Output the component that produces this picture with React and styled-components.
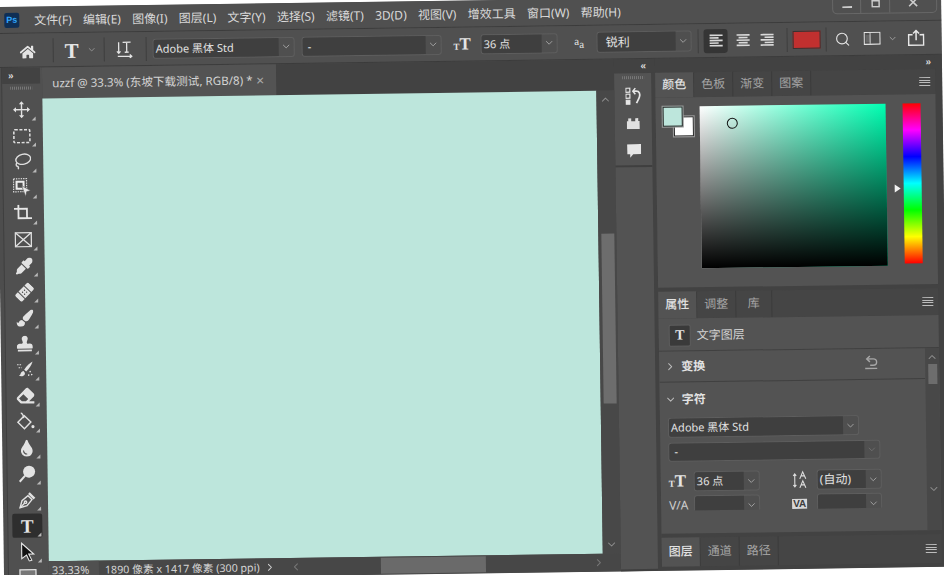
import React from "react";
import styled, { createGlobalStyle } from "styled-components";
import { FaHome, FaEyeDropper, FaBandAid, FaPaintBrush, FaStamp, FaEraser, FaTint } from "react-icons/fa";
import { ChevronDown, ChevronRight, ChevronLeft, ChevronUp, Search } from "lucide-react";

const GlobalStyle = createGlobalStyle`
  html, body {
    margin: 0;
    height: 100%;
    overflow: hidden;
    background: #fff;
  }
`;

const FONT = `"Noto Sans", "Noto Sans CJK SC", sans-serif`;

// the photo of the screen is slightly tilted, the whole window turns with it
const Window = styled.div`
  width: 945px;
  height: 573px;
  margin: 6.5px 0 0 -4px;
  transform: rotate(-0.8deg);
  transform-origin: 4px -6.5px;
  background: #4d4d4d;
  color: #d6d6d6;
  font: 12px/16px ${FONT};
  display: flex;
  flex-direction: column;
  overflow: hidden;
`;

/* title bar */
const TitleBar = styled.div`
  height: 27px;
  flex: none;
  display: flex;
  align-items: center;
  padding: 1px 4px 0 8px;
  box-sizing: border-box;
  background: #505050;
  border-bottom: 1px solid #3c3c3c;
`;

const PsLogo = styled.div`
  width: 15px;
  height: 15px;
  background: #0f2f55;
  border-radius: 2px;
  color: #31a8ff;
  font: bold 9px/15px "Liberation Sans", sans-serif;
  text-align: center;
  margin-right: 15px;
`;

const MenuItem = styled.span`
  margin-right: 11.3px;
  white-space: nowrap;
  color: #d9d9d9;
`;

const WinControls = styled.div`
  margin-left: auto;
  align-self: flex-start;
  margin-top: -7px;
  width: 105px;
  height: 25px;
  flex: none;
  display: flex;
  border: 1px solid #676767;
  border-radius: 0 0 5px 5px;
  box-sizing: border-box;
`;

const WinButton = styled.div`
  width: ${(p) => p.$w}px;
  flex: ${(p) => (p.$w ? "none" : 1)};
  display: flex;
  align-items: flex-end;
  justify-content: center;
  padding-bottom: 5px;
  box-sizing: border-box;
  & + & {
    border-left: 1px solid #676767;
  }
`;

/* options bar */
const OptionsBar = styled.div`
  height: 34px;
  flex: none;
  display: flex;
  align-items: center;
  padding-left: 23px;
  background: #505050;
  border-bottom: 1px solid #3c3c3c;
  box-sizing: border-box;
`;

const Sep = styled.div`
  width: 1px;
  height: 24px;
  flex: none;
  background: #3e3e3e;
  margin: 0 ${(p) => p.$r ?? 6}px 0 ${(p) => p.$l ?? 6}px;
`;

const Combo = styled.div`
  width: ${(p) => p.$w}px;
  height: ${(p) => p.$h ?? 20}px;
  flex: none;
  display: flex;
  box-sizing: border-box;
  border: 1px solid #5e5e5e;
  border-radius: 3px;
  background: #4f4f4f;
  margin: ${(p) => p.$m ?? "0"};
`;

const ComboText = styled.div`
  flex: 1;
  min-width: 0;
  background: #3f3f3f;
  padding-left: ${(p) => p.$pad ?? 2}px;
  font-size: ${(p) => p.$size ?? 11}px;
  line-height: ${(p) => p.$line ?? 17}px;
  color: #e2e2e2;
  white-space: nowrap;
  border-radius: 2px 0 0 2px;
`;

const ComboArrow = styled.div`
  width: 15px;
  flex: none;
  display: flex;
  align-items: center;
  justify-content: center;
  color: ${(p) => (p.$dim ? "#777" : "#bbb")};
`;

const OptIcon = styled.div`
  flex: none;
  width: ${(p) => p.$w}px;
  margin: ${(p) => p.$m ?? "0"};
  padding-top: ${(p) => p.$top ?? 0}px;
  display: flex;
  align-items: center;
  justify-content: center;
  color: #e4e4e4;
`;

const SerifT = styled.span`
  font: bold ${(p) => p.$size ?? 20}px/${(p) => p.$size ?? 20}px "Liberation Serif", serif;
  color: #e6e6e6;
`;

const SizeT = ({ big = 20, small = 10 }) => (
  <span>
    <SerifT $size={small}>T</SerifT>
    <SerifT $size={big}>T</SerifT>
  </span>
);

const AlignBtn = styled.div`
  width: ${(p) => p.$w ?? 24}px;
  height: 24px;
  flex: none;
  margin-right: ${(p) => p.$mr ?? 0}px;
  display: flex;
  align-items: center;
  justify-content: center;
  border-radius: 3px;
  background: ${(p) => (p.$on ? "#353535" : "transparent")};
`;

const ColorChip = styled.div`
  width: 28px;
  height: 18px;
  flex: none;
  background: #c1302f;
  border: 1px solid #333;
  box-sizing: border-box;
`;

const AlignIcon = ({ kind }) => {
  const rows = [13, 9, 13, 9, 13];
  return (
    <svg width="15" height="15" viewBox="0 0 15 15">
      {rows.map((w, i) => {
        const x = kind === "left" ? 1 : kind === "right" ? 14 - w : 7.5 - w / 2;
        return <rect key={i} x={x} y={1.5 + i * 2.6} width={w} height="1.6" fill="#d9d9d9" />;
      })}
    </svg>
  );
};

const WorkspaceIcon = () => (
  <svg width="17" height="13" viewBox="0 0 17 13" fill="none" stroke="#e4e4e4">
    <rect x="0.5" y="0.5" width="16" height="12" strokeWidth="1.3" />
    <rect x="2" y="3" width="5" height="7.5" fill="#e4e4e4" opacity="0.15" stroke="none" />
    <path d="M6.5 1v11" strokeWidth="0.8" />
  </svg>
);

const ShareIcon = () => (
  <svg width="17" height="17" viewBox="0 0 17 17" fill="none" stroke="#e8e8e8" strokeWidth="1.5">
    <path d="M5 5.5H1v10.5h15V5.5h-4" />
    <path d="M8.5 11V1.5M5.5 4.3l3-3 3 3" />
  </svg>
);

const OrientIcon = () => (
  <svg width="18" height="18" viewBox="0 0 18 18" fill="none" stroke="#e4e4e4" strokeWidth="1.3">
    <path d="M7 2h8M11 2v10M9 12h4" />
    <path d="M3 2v11M1.2 11l1.8 2 1.8-2" />
    <path d="M2 16h14M14 14.2l2 1.8-2 1.8" />
  </svg>
);

/* workspace */
const Workspace = styled.div`
  flex: 1;
  min-height: 0;
  display: flex;
`;

const ToolColumn = styled.div`
  width: 41px;
  flex: none;
  margin-left: 4px;
  padding-right: 2px;
  background: #505050;
  border-left: 1px solid #3f3f3f;
  box-sizing: border-box;
  display: flex;
  flex-direction: column;
  align-items: center;
`;

const CollapseBar = styled.div`
  height: ${(p) => p.$h ?? 14}px;
  flex: none;
  align-self: stretch;
  margin-right: ${(p) => p.$mr ?? 0}px;
  display: flex;
  align-items: center;
  justify-content: ${(p) => p.$justify ?? "flex-start"};
  padding: 0 ${(p) => p.$pad ?? 6}px;
  background: #424242;
  color: #ddd;
  font: bold 10px/10px "Liberation Sans", sans-serif;
`;

const Grip = styled.div`
  width: 22px;
  height: 3px;
  flex: none;
  margin: ${(p) => p.$m ?? "3px auto 8px"};
  background: repeating-linear-gradient(to right, #777 0 1px, transparent 1px 2px);
`;

const Tool = styled.div`
  width: 30px;
  height: 24px;
  margin-bottom: 2px;
  flex: none;
  position: relative;
  display: flex;
  align-items: center;
  justify-content: center;
  color: #e2e2e2;
  border-radius: 2px;
  background: ${(p) => (p.$on ? "#2e2e2e" : "transparent")};
  &::after {
    content: "";
    display: ${(p) => (p.$plain ? "none" : "block")};
    position: absolute;
    right: 1px;
    bottom: 1px;
    border-style: solid;
    border-width: 0 0 4px 4px;
    border-color: transparent transparent #b8b8b8 transparent;
  }
`;

const MoveIcon = () => (
  <svg width="18" height="18" viewBox="0 0 18 18" fill="#e2e2e2" stroke="#e2e2e2">
    <path d="M9 2v14M2 9h14" strokeWidth="1.4" />
    <path d="M9 0.5l2.6 3H6.4zM9 17.5l2.6-3H6.4zM0.5 9l3-2.6v5.2zM17.5 9l-3-2.6v5.2z" stroke="none" />
  </svg>
);
const MarqueeIcon = () => (
  <svg width="18" height="15" viewBox="0 0 18 15" fill="none" stroke="#dedede" strokeWidth="1.6" strokeDasharray="3 1.6">
    <rect x="1" y="1" width="16" height="13" rx="1" />
  </svg>
);
const LassoIcon = () => (
  <svg width="18" height="18" viewBox="0 0 18 18" fill="none" stroke="#dedede" strokeWidth="1.4">
    <ellipse cx="10" cy="6.5" rx="7.5" ry="5" transform="rotate(-12 10 6.5)" />
    <path d="M4 10c-1.5 1-1.5 3 0 3.5 1 .3 1.6 1.5 .8 3" />
  </svg>
);
const ObjectSelectIcon = () => (
  <svg width="20" height="20" viewBox="0 0 20 20" fill="none">
    <rect x="1" y="1" width="13" height="13" stroke="#ddd" strokeWidth="1.2" strokeDasharray="1.4 1" />
    <rect x="4" y="4" width="7" height="7" stroke="#eee" strokeWidth="2" />
    <path d="M9 8l9 5-4 1 -1 5z" fill="#e8e8e8" stroke="#4d4d4d" strokeWidth="0.6" />
  </svg>
);
const CropIcon = () => (
  <svg width="18" height="18" viewBox="0 0 18 18" fill="none" stroke="#e6e6e6" strokeWidth="1.8">
    <path d="M0 4h13v10M4.5 0v13.5H18" />
  </svg>
);
const FrameIcon = () => (
  <svg width="18" height="16" viewBox="0 0 18 16" fill="none" stroke="#e0e0e0" strokeWidth="1.3">
    <rect x="1" y="1" width="16" height="14" />
    <path d="M1 1l16 14M17 1L1 15" />
  </svg>
);
const MixerIcon = () => (
  <svg width="19" height="18" viewBox="0 0 19 18" fill="#e2e2e2">
    <path d="M16.5 1c-3 1.5-6 4.5-8.5 8l2 1.8c3-2.5 5.5-6.2 6.5-9.8z" />
    <path d="M7.3 10.2c-2 .2-2.6 1.8-3 3-.2 .8-1 1.2-1.8 1.3 1.6 1.3 5 1.3 6-.8 .5-1 .3-2-1.2-3.5z" />
    <path d="M1 4h5M2.5 7h3" stroke="#e2e2e2" strokeDasharray="1.5 1" />
    <circle cx="14" cy="11" r="0.8" /><circle cx="15.5" cy="14" r="0.8" /><circle cx="12.5" cy="14.5" r="0.8" />
  </svg>
);
const BucketIcon = () => (
  <svg width="20" height="20" viewBox="0 0 20 20" fill="none" stroke="#e2e2e2" strokeWidth="1.4">
    <path d="M8.5 4L2 10.5 8.5 17 15 10.5z" />
    <path d="M5 1.5c1.5 0 2.5 2 3 5" />
    <circle cx="17" cy="15" r="1.6" fill="#e2e2e2" stroke="none" />
  </svg>
);
const DodgeIcon = () => (
  <svg width="19" height="19" viewBox="0 0 19 19" fill="#e2e2e2">
    <circle cx="11.5" cy="7" r="6" />
    <path d="M7.5 11L2 17" stroke="#e2e2e2" strokeWidth="2" />
  </svg>
);
const PenIcon = () => (
  <svg width="19" height="19" viewBox="0 0 19 19" fill="none" stroke="#e2e2e2" strokeWidth="1.4">
    <path d="M2 17l2-7 6-5 4 4-5 6z" />
    <path d="M2 17l4.5-4.5" />
    <circle cx="7.5" cy="11.5" r="1.2" />
    <path d="M11 2.5l5.5 5.5" strokeWidth="2.4" />
  </svg>
);
const ArrowIcon = () => (
  <svg width="16" height="20" viewBox="0 0 16 20" fill="#111" stroke="#e6e6e6" strokeWidth="1.1">
    <path d="M2 1.5l12 11h-5l3 6-2.4 1-2.8-6L2 17z" />
  </svg>
);
const ColorRectIcon = () => (
  <svg width="18" height="18" viewBox="0 0 18 18" fill="#777" stroke="#e0e0e0" strokeWidth="1.3">
    <rect x="1" y="1" width="16" height="16" />
  </svg>
);
const ResetGlyph = () => (
  <svg width="14" height="15" viewBox="0 0 14 15" fill="none" stroke="#a6a6a6" strokeWidth="1.4">
    <path d="M3 4h6c2.2 0 3.5 1.4 3.5 3.2S11.2 10.4 9 10.4H6" />
    <path d="M5.8 1L2.6 4l3.2 3" />
    <path d="M1 13.6h12" />
  </svg>
);

const TOOLS = [
  <MoveIcon />,
  <MarqueeIcon />,
  <LassoIcon />,
  <ObjectSelectIcon />,
  <CropIcon />,
  <FrameIcon />,
  <FaEyeDropper size={17} />,
  <FaBandAid size={19} style={{ transform: "rotate(-45deg)" }} />,
  <FaPaintBrush size={17} />,
  <FaStamp size={16} />,
  <MixerIcon />,
  <FaEraser size={18} />,
  <BucketIcon />,
  <FaTint size={17} />,
  <DodgeIcon />,
  <PenIcon />,
];

/* document area */
const DocArea = styled.div`
  width: 572px;
  flex: none;
  display: flex;
  flex-direction: column;
`;

const TabBar = styled.div`
  height: 31px;
  flex: none;
  display: flex;
  background: #424242;
`;

const DocTab = styled.div`
  width: 234px;
  display: flex;
  align-items: center;
  padding: 0 12px 0 10px;
  box-sizing: border-box;
  background: #535353;
  font-size: 11.6px;
  color: #d4d4d4;
  white-space: nowrap;
`;

const Close = styled.span`
  margin-left: auto;
  color: #aaa;
  font-size: 14px;
`;

const CanvasRow = styled.div`
  flex: 1;
  min-height: 0;
  display: flex;
`;

const Canvas = styled.div`
  flex: 1;
  background: #bde6dc;
`;

const VScroll = styled.div`
  width: ${(p) => p.$w ?? 18}px;
  flex: none;
  display: flex;
  flex-direction: column;
  align-items: center;
  justify-content: space-between;
  background: #484848;
  position: relative;
  padding: 3px 0;
  box-sizing: border-box;
  color: #8c8c8c;
`;

const VThumb = styled.div`
  position: absolute;
  left: 3px;
  right: 2px;
  top: ${(p) => p.$top}px;
  height: ${(p) => p.$h}px;
  background: #6d6d6d;
`;

const StatusBar = styled.div`
  height: 18px;
  flex: none;
  display: flex;
  align-items: center;
  font-size: 11px;
  color: #d4d4d4;
  white-space: nowrap;
  background: #474747;
`;

const Zoom = styled.div`
  width: 50px;
  padding-left: 3px;
  box-sizing: border-box;
  background: #505050;
  line-height: 18px;
  height: 18px;
`;

const DocInfo = styled.div`
  width: 179px;
  padding-left: 6px;
  flex: none;
  display: flex;
  align-items: center;
  justify-content: space-between;
  padding-right: 2px;
  box-sizing: border-box;
  font-size: 10.7px;
`;

const HScroll = styled.div`
  flex: 1;
  display: flex;
  align-items: center;
  justify-content: space-between;
  position: relative;
  height: 100%;
  color: #777;
  padding: 0 16px 0 12px;
  box-sizing: border-box;
`;

const HThumb = styled.div`
  position: absolute;
  left: 103px;
  width: 105px;
  top: 1px;
  bottom: 1px;
  background: #6a6a6a;
`;

/* dock strip of collapsed panels */
const DockStrip = styled.div`
  width: 41px;
  flex: none;
  display: flex;
  flex-direction: column;
  background: #424242;
`;

const DockBox = styled.div`
  width: 37px;
  background: #535353;
  border-bottom: 2px solid #3f3f3f;
  display: flex;
  flex-direction: column;
  align-items: center;
  color: #e0e0e0;
  height: ${(p) => p.$h ?? "auto"};
  flex: ${(p) => (p.$grow ? 1 : "none")};
`;

const DockIcon = styled.div`
  height: 28px;
  display: flex;
  align-items: center;
`;

const HistoryIcon = () => (
  <svg width="16" height="18" viewBox="0 0 16 18" fill="none" stroke="#e6e6e6">
    <rect x="0.5" y="1" width="4" height="4" strokeWidth="1.2" />
    <rect x="0.5" y="7" width="4" height="4" strokeWidth="1.2" />
    <rect x="0.5" y="13" width="4" height="4" fill="#e6e6e6" />
    <path d="M8 4h3c3 0 4 3 3 6-.6 2-2 4-3 6" strokeWidth="1.7" />
    <path d="M10 1L7.5 4 10 7" strokeWidth="1.5" />
  </svg>
);
const LibraryIcon = () => (
  <svg width="13" height="11" viewBox="0 0 13 11" fill="#e0e0e0">
    <path d="M0 3h1.5V0h3v3h4V0h3v3H13v8H0z" />
  </svg>
);
const CommentIcon = () => (
  <svg width="14" height="14" viewBox="0 0 14 14" fill="#e6e6e6">
    <path d="M0 0h14v10H6l-3 3.5V10H0z" />
  </svg>
);

/* panels */
const Panels = styled.div`
  flex: 1;
  min-width: 0;
  display: flex;
  flex-direction: column;
  background: #424242;
  padding-right: 7px;
`;

const PanelTabs = styled.div`
  height: ${(p) => p.$h}px;
  flex: none;
  display: flex;
  background: #454545;
  margin: ${(p) => p.$mt ?? 0}px 0 ${(p) => p.$mb ?? 0}px;
`;

const PanelTab = styled.div`
  width: ${(p) => p.$w ?? 39}px;
  display: flex;
  align-items: center;
  justify-content: center;
  padding-bottom: 2px;
  font-size: 12px;
  font-weight: ${(p) => (p.$on ? 500 : 400)};
  color: ${(p) => (p.$on ? "#e2e2e2" : "#a4a4a4")};
  background: ${(p) => (p.$on ? "#535353" : "transparent")};
  border-right: 1px solid #3c3c3c;
  box-sizing: border-box;
`;

const MenuLines = styled.div`
  margin: auto 5px auto auto;
  width: 11px;
  height: 9px;
  background: repeating-linear-gradient(to bottom, #bdbdbd 0 1px, transparent 1px 2.6px);
`;

const ColorBody = styled.div`
  height: 190px;
  flex: none;
  display: flex;
  background: #535353;
  padding: 9px 0 0 7px;
  box-sizing: border-box;
`;

const Swatches = styled.div`
  width: 36.5px;
  flex: none;
  position: relative;
`;

const Swatch = styled.div`
  width: 20px;
  height: 20px;
  box-sizing: border-box;
  position: absolute;
  left: ${(p) => p.$x}px;
  top: ${(p) => p.$y}px;
  background: ${(p) => p.$c};
  border: 1px solid #222;
  box-shadow: 0 0 0 1px #9a9a9a;
`;

const ColorField = styled.div`
  width: 186px;
  height: 162px;
  flex: none;
  position: relative;
  background: linear-gradient(to bottom, transparent, #000),
    linear-gradient(to right, #fff, #00ffb2);
`;

const Picker = styled.div`
  position: absolute;
  left: 27px;
  top: 12px;
  width: 11px;
  height: 11px;
  box-sizing: border-box;
  border-radius: 50%;
  border: 1px solid #111;
`;

const HueBar = styled.div`
  width: 18px;
  height: 160px;
  flex: none;
  margin-left: 17px;
  position: relative;
  background: linear-gradient(to bottom, #f00, #f0f, #00f, #0ff, #0f0, #ff0, #f00);
`;

const HueArrow = styled.div`
  position: absolute;
  left: -9px;
  top: 81px;
  width: 0;
  height: 0;
  border-style: solid;
  border-width: 4px 0 4px 6px;
  border-color: transparent transparent transparent #f2f2f2;
`;

const PropsHead = styled.div`
  height: 33px;
  flex: none;
  display: flex;
  align-items: center;
  padding: 2px 0 0 10px;
  background: #535353;
  border-bottom: 1px solid #404040;
  box-sizing: border-box;
  color: #d2d2d2;
`;

const TypeBadge = styled.div`
  width: 22px;
  height: 22px;
  display: flex;
  align-items: center;
  justify-content: center;
  background: #3a3a3a;
  border: 1px solid #5e5e5e;
  border-radius: 2px;
  margin-right: 6px;
  box-sizing: border-box;
`;

const PropsScrollArea = styled.div`
  flex: 1;
  min-height: 0;
  display: flex;
  background: #535353;
  position: relative;
`;

const PropsContent = styled.div`
  flex: 1;
  min-width: 0;
  overflow: hidden;
`;

const SectionHead = styled.div`
  height: ${(p) => p.$h}px;
  margin-top: ${(p) => p.$mt ?? 0}px;
  display: flex;
  align-items: center;
  padding-left: 5px;
  font-weight: 700;
  color: #e2e2e2;
  border-bottom: ${(p) => (p.$line ? "1px solid #404040" : "0")};
  box-sizing: border-box;
  position: relative;
`;

const SectionLabel = styled.span`
  margin-left: 5px;
`;

const ResetIcon = styled.div`
  position: absolute;
  left: 205px;
  top: 6px;
`;

const CharRows = styled.div`
  padding: 0 8px;
  margin-top: 5px;
  height: 93px;
  overflow: hidden;
`;

const SplitRow = styled.div`
  display: grid;
  grid-template-columns: 123px 1fr;
  margin-top: ${(p) => p.$mt}px;
`;

const Cell = styled.div`
  display: flex;
  align-items: center;
`;

const CellIcon = styled.div`
  width: 25px;
  flex: none;
  display: flex;
  justify-content: flex-start;
  font-size: 12px;
  color: #cfcfcf;
`;

const KernBadge = styled.span`
  background: #d8d8d8;
  color: #3c3c3c;
  font: bold 10px/10px "Liberation Sans", sans-serif;
  padding: 0 1px;
`;

const Leading = () => (
  <svg width="20" height="20" viewBox="0 0 20 20" fill="none" stroke="#dedede" strokeWidth="1.1">
    <path d="M8 9l3-7 3 7M9.5 6h3" />
    <path d="M8 18l3-7 3 7M9.5 15h3" />
    <path d="M3 4v13M1.5 6L3 4l1.5 2M1.5 15L3 17l1.5-2" />
  </svg>
);

const tiny = { size: 11, strokeWidth: 1.6 };

const MENU = ["文件(F)", "编辑(E)", "图像(I)", "图层(L)", "文字(Y)", "选择(S)", "滤镜(T)", "3D(D)", "视图(V)", "增效工具", "窗口(W)", "帮助(H)"];

const App = () => {
  return (
    <>
      <GlobalStyle />
      <Window>
        <TitleBar>
          <PsLogo>Ps</PsLogo>
          {MENU.map((m) => (
            <MenuItem key={m}>{m}</MenuItem>
          ))}
          <WinControls>
            <WinButton $w={27}>
              <svg width="10" height="2"><rect width="10" height="2" fill="#ccc" /></svg>
            </WinButton>
            <WinButton $w={29}>
              <svg width="9" height="8" fill="none" stroke="#ccc" strokeWidth="1.5"><rect x="1" y="1" width="7" height="6" /></svg>
            </WinButton>
            <WinButton>
              <svg width="10" height="9" stroke="#ccc" strokeWidth="1.6"><path d="M1 0l8 8M9 0L1 8" /></svg>
            </WinButton>
          </WinControls>
        </TitleBar>

        <OptionsBar>
          <OptIcon $w={16} $top={3}><FaHome size={17} /></OptIcon>
          <Sep $l={17} $r={11} />
          <OptIcon $w={14} $top={3}><SerifT $size={21}>T</SerifT></OptIcon>
          <OptIcon $w={12} $m="0 0 0 7px"><ChevronDown size={10} color="#9c9c9c" /></OptIcon>
          <Sep $l={6} $r={11} />
          <OptIcon $w={18}><OrientIcon /></OptIcon>
          <Sep $l={12} $r={6} />
          <Combo $w={142}>
            <ComboText>Adobe 黑体 Std</ComboText>
            <ComboArrow><ChevronDown {...tiny} /></ComboArrow>
          </Combo>
          <Combo $w={140} $m="0 0 0 7px">
            <ComboText $pad={5}>-</ComboText>
            <ComboArrow><ChevronDown {...tiny} /></ComboArrow>
          </Combo>
          <OptIcon $w={19} $m="0 0 0 11px"><SizeT big={17} small={9} /></OptIcon>
          <Combo $w={77} $m="0 0 0 9px">
            <ComboText>36 点</ComboText>
            <ComboArrow><ChevronDown {...tiny} /></ComboArrow>
          </Combo>
          <OptIcon $w={15} $m="0 0 0 14px">
            <span style={{ fontFamily: "Liberation Serif", fontSize: 11 }}>a<sub style={{ fontSize: 11 }}>a</sub></span>
          </OptIcon>
          <Combo $w={95} $h={21} $m="0 0 0 10px">
            <ComboText $size={12} $pad={8} $line={19}>锐利</ComboText>
            <ComboArrow><ChevronDown {...tiny} /></ComboArrow>
          </Combo>
          <Sep $l={6} $r={5} />
          <AlignBtn $on $mr={3}><AlignIcon kind="left" /></AlignBtn>
          <AlignBtn><AlignIcon kind="center" /></AlignBtn>
          <AlignBtn><AlignIcon kind="right" /></AlignBtn>
          <Sep $l={8} $r={5} />
          <ColorChip />
          <Sep $l={5} $r={8} />
          <OptIcon $w={16}><Search size={16} strokeWidth={1.7} /></OptIcon>
          <OptIcon $w={17} $m="0 0 0 13px"><WorkspaceIcon /></OptIcon>
          <OptIcon $w={12} $m="0 0 0 6px"><ChevronDown size={10} color="#aaa" /></OptIcon>
          <OptIcon $w={17} $m="0 0 0 9px"><ShareIcon /></OptIcon>
        </OptionsBar>

        <Workspace>
          <ToolColumn>
            <CollapseBar $h={16}>»</CollapseBar>
            <Grip />
            {TOOLS.map((icon, i) => (
              <Tool key={i}>{icon}</Tool>
            ))}
            <Tool $on><SerifT $size={19}>T</SerifT></Tool>
            <Tool><ArrowIcon /></Tool>
            <Tool $plain><ColorRectIcon /></Tool>
          </ToolColumn>

          <DocArea>
            <TabBar>
              <DocTab>
                uzzf @ 33.3% (东坡下载测试, RGB/8) *
                <Close>×</Close>
              </DocTab>
            </TabBar>
            <CanvasRow>
              <Canvas />
              <VScroll>
                <ChevronUp size={12} />
                <VThumb $top={143} $h={170} />
                <ChevronDown size={12} />
              </VScroll>
            </CanvasRow>
            <StatusBar>
              <Zoom>33.33%</Zoom>
              <DocInfo>
                <span>1890 像素 x 1417 像素 (300 ppi)</span>
                <ChevronRight size={12} />
              </DocInfo>
              <HScroll>
                <ChevronLeft size={12} />
                <HThumb />
                <ChevronRight size={12} />
              </HScroll>
            </StatusBar>
          </DocArea>

          <DockStrip>
            <CollapseBar $justify="flex-end" $pad={9}>«</CollapseBar>
            <DockBox $h="92px">
              <Grip $m="3px auto 3px" />
              <DockIcon><HistoryIcon /></DockIcon>
              <DockIcon><LibraryIcon /></DockIcon>
              <DockIcon><CommentIcon /></DockIcon>
            </DockBox>
            <DockBox $grow />
          </DockStrip>

          <Panels>
            <CollapseBar $justify="flex-end" $pad={4}>»</CollapseBar>
            <PanelTabs $h={25}>
              <PanelTab $on>颜色</PanelTab>
              <PanelTab>色板</PanelTab>
              <PanelTab>渐变</PanelTab>
              <PanelTab>图案</PanelTab>
              <MenuLines />
            </PanelTabs>
            <ColorBody>
              <Swatches>
                <Swatch $x={11} $y={10} $c="#fff" />
                <Swatch $x={0} $y={0} $c="#bde6dc" />
              </Swatches>
              <ColorField>
                <Picker />
              </ColorField>
              <HueBar>
                <HueArrow />
              </HueBar>
            </ColorBody>

            <PanelTabs $h={27} $mt={4}>
              <PanelTab $on>属性</PanelTab>
              <PanelTab>调整</PanelTab>
              <PanelTab $w={36}>库</PanelTab>
              <MenuLines />
            </PanelTabs>
            <PropsHead>
              <TypeBadge><SerifT $size={14}>T</SerifT></TypeBadge>
              文字图层
            </PropsHead>
            <PropsScrollArea>
              <PropsContent>
                <SectionHead $h={31} $line>
                  <ChevronRight size={12} color="#bbb" />
                  <SectionLabel>变换</SectionLabel>
                  <ResetIcon><ResetGlyph /></ResetIcon>
                </SectionHead>
                <SectionHead $h={26} $mt={4}>
                  <ChevronDown size={12} color="#bbb" />
                  <SectionLabel>字符</SectionLabel>
                </SectionHead>
                <CharRows>
                  <Combo $w={191}>
                    <ComboText>Adobe 黑体 Std</ComboText>
                    <ComboArrow><ChevronDown {...tiny} /></ComboArrow>
                  </Combo>
                  <Combo $w={212} $h={19} $m="5px 0 0">
                    <ComboText $pad={5} $line={16}>-</ComboText>
                    <ComboArrow $dim><ChevronDown {...tiny} /></ComboArrow>
                  </Combo>
                  <SplitRow $mt={10}>
                    <Cell>
                      <CellIcon><SizeT big={17} small={9} /></CellIcon>
                      <Combo $w={66}>
                        <ComboText>36 点</ComboText>
                        <ComboArrow><ChevronDown {...tiny} /></ComboArrow>
                      </Combo>
                    </Cell>
                    <Cell>
                      <CellIcon><Leading /></CellIcon>
                      <Combo $w={65}>
                        <ComboText $size={12}>(自动)</ComboText>
                        <ComboArrow><ChevronDown {...tiny} /></ComboArrow>
                      </Combo>
                    </Cell>
                  </SplitRow>
                  <SplitRow $mt={4}>
                    <Cell>
                      <CellIcon>V/A</CellIcon>
                      <Combo $w={66}>
                        <ComboText />
                        <ComboArrow><ChevronDown {...tiny} /></ComboArrow>
                      </Combo>
                    </Cell>
                    <Cell>
                      <CellIcon><KernBadge>VA</KernBadge></CellIcon>
                      <Combo $w={65}>
                        <ComboText />
                        <ComboArrow><ChevronDown {...tiny} /></ComboArrow>
                      </Combo>
                    </Cell>
                  </SplitRow>
                </CharRows>
              </PropsContent>
              <VScroll $w={14}>
                <ChevronUp size={12} />
                <VThumb $top={16} $h={20} />
                <ChevronDown size={12} style={{ marginBottom: 32 }} />
              </VScroll>
            </PropsScrollArea>
            <PanelTabs $h={29} $mt={4} $mb={4}>
              <PanelTab $on>图层</PanelTab>
              <PanelTab>通道</PanelTab>
              <PanelTab>路径</PanelTab>
              <MenuLines />
            </PanelTabs>
          </Panels>
        </Workspace>
      </Window>
    </>
  );
};

export default App;
